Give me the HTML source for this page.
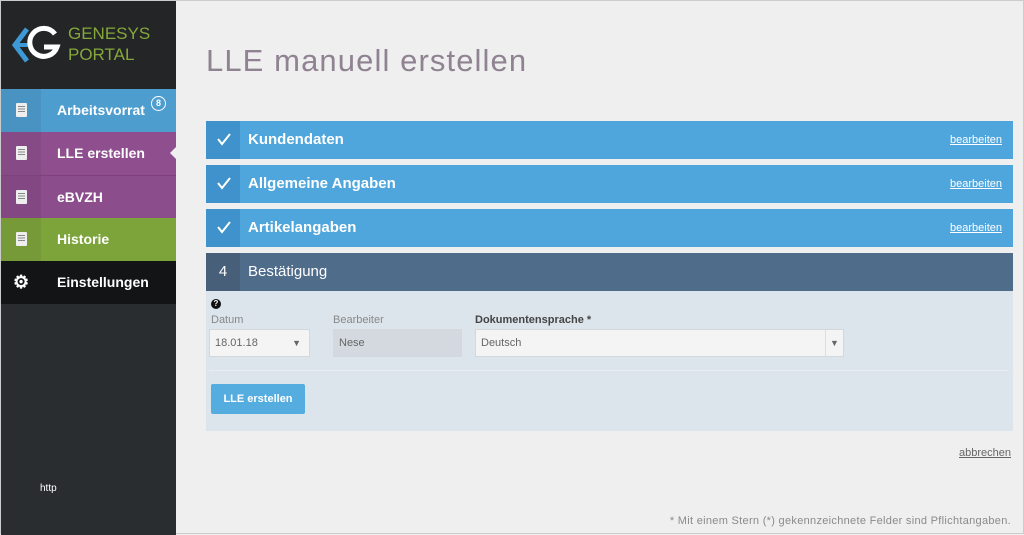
<!DOCTYPE html>
<html><head><meta charset="utf-8"><style>
*{margin:0;padding:0;box-sizing:border-box}
body{width:1024px;height:534px;overflow:hidden;background:#efefef;font-family:"Liberation Sans",sans-serif;position:relative;border:1px solid #ccc}
.sb{position:absolute;left:0;top:0;width:175px;height:534px;background:#2a2d30}
.logo{position:absolute;left:0;top:0;width:175px;height:88px;background:#232527}
.nav{position:absolute;left:0;width:175px;height:43px;color:#fff;font-size:14px;font-weight:bold;line-height:43px}
.nav .ic{position:absolute;left:0;top:0;width:40px;height:43px;background:rgba(0,0,0,0.06)}
.nav .t{position:absolute;left:56px;top:0}
.doc{position:absolute;left:15px;top:14px;width:11px;height:14px;background:#eee;border-radius:1px}
.doc:before{content:"";position:absolute;left:2px;top:3px;width:7px;height:7px;background:repeating-linear-gradient(#888 0 1px,transparent 1px 2.5px)}
.bar{position:absolute;left:205px;width:807px;height:38px;background:#4fa6dc;color:#fff;font-size:15px;font-weight:bold}
.bar .sq{position:absolute;left:0;top:0;width:34px;height:38px;background:#3f92cb}
.bar .t{position:absolute;left:42px;top:10px}
.bar .e{position:absolute;right:11px;top:13px;font-size:11px;text-decoration:underline;font-weight:normal}
.chk{position:absolute;left:10px;top:10px}
.lbl{position:absolute;font-size:11px;color:#888}
.inp{position:absolute;height:28px;border:1px solid #d5d8db;background:#f4f4f4;font-size:11px;color:#666;line-height:26px;padding-left:5px}
</style></head><body>
<div class="sb">
 <div class="logo">
  <svg style="position:absolute;left:10px;top:24px" width="52" height="40" viewBox="0 0 52 40">
   <path d="M16 4 L4 20 L16 36" fill="none" stroke="#3d9ad6" stroke-width="5"/>
   <path d="M6 20 H20" stroke="#3d9ad6" stroke-width="4"/>
   <path d="M44 9 A14 14 0 1 0 46 22 H33" fill="none" stroke="#fff" stroke-width="5"/>
  </svg>
  <div style="position:absolute;left:67px;top:22px;color:#86a83a;font-size:17px;line-height:21px">GENESYS<br>PORTAL</div>
 </div>
 <div class="nav" style="top:88px;background:#4e9dcf"><div class="ic"><div class="doc"></div></div><span class="t">Arbeitsvorrat</span>
  <span style="position:absolute;left:150px;top:7px;width:15px;height:15px;border:1.5px solid #fff;border-radius:50%;font-size:9px;line-height:12px;text-align:center">8</span></div>
 <div class="nav" style="top:131px;background:#8f4f8f"><div class="ic"><div class="doc"></div></div><span class="t">LLE erstellen</span>
  <span style="position:absolute;right:0;top:15px;border:6px solid transparent;border-right-color:#efefef"></span></div>
 <div class="nav" style="top:174px;background:#8c4d8c;border-top:1px solid #7d427d"><div class="ic"><div class="doc"></div></div><span class="t">eBVZH</span></div>
 <div class="nav" style="top:217px;background:#7da43b"><div class="ic"><div class="doc"></div></div><span class="t">Historie</span></div>
 <div class="nav" style="top:260px;background:#121416"><span style="position:absolute;left:12px;top:0;font-size:18px">⚙</span><span class="t">Einstellungen</span></div>
 <div style="position:absolute;left:39px;top:482px;color:#fff;font-size:10px">http</div>
</div>
<div style="position:absolute;left:205px;top:42px;font-size:31px;color:#8f8291;letter-spacing:1.1px">LLE manuell erstellen</div>

<div class="bar" style="top:120px"><div class="sq"><svg class="chk" width="16" height="16"><path d="M2 8 L6 13 L14 3" stroke="#fff" stroke-width="2" fill="none"/></svg></div><span class="t">Kundendaten</span><span class="e">bearbeiten</span></div>
<div class="bar" style="top:164px"><div class="sq"><svg class="chk" width="16" height="16"><path d="M2 8 L6 13 L14 3" stroke="#fff" stroke-width="2" fill="none"/></svg></div><span class="t">Allgemeine Angaben</span><span class="e">bearbeiten</span></div>
<div class="bar" style="top:208px"><div class="sq"><svg class="chk" width="16" height="16"><path d="M2 8 L6 13 L14 3" stroke="#fff" stroke-width="2" fill="none"/></svg></div><span class="t">Artikelangaben</span><span class="e">bearbeiten</span></div>
<div class="bar" style="top:252px;background:#4f6c8a"><div class="sq" style="background:#475f79;text-align:center;line-height:38px;font-weight:normal">4</div><span class="t" style="font-weight:normal">Bestätigung</span></div>

<div style="position:absolute;left:205px;top:290px;width:807px;height:140px;background:#dde5ec">
 <div style="position:absolute;left:5px;top:8px;width:10px;height:10px;border-radius:50%;background:#111;color:#fff;font-size:8px;line-height:10px;text-align:center;font-weight:bold">?</div>
 <div class="lbl" style="left:5px;top:23px">Datum</div>
 <div class="lbl" style="left:127px;top:23px">Bearbeiter</div>
 <div class="lbl" style="left:269px;top:23px;color:#444;font-weight:bold">Dokumentensprache *</div>
 <div class="inp" style="left:3px;top:38px;width:101px">18.01.18<span style="position:absolute;right:8px;font-size:9px">▼</span></div>
 <div class="inp" style="left:127px;top:38px;width:129px;background:#d3d9df">Nese</div>
 <div class="inp" style="left:269px;top:38px;width:369px">Deutsch<span style="position:absolute;right:0;top:0;width:18px;height:26px;border-left:1px solid #ddd;text-align:center;font-size:9px">▼</span></div>
 <div style="position:absolute;left:3px;top:79px;width:800px;border-top:1px solid #e8edf1"></div>
 <div style="position:absolute;left:5px;top:93px;width:94px;height:30px;background:#54acdf;border-radius:2px;color:#fff;font-size:11px;font-weight:bold;text-align:center;line-height:30px">LLE erstellen</div>
</div>
<div style="position:absolute;right:12px;top:446px;font-size:11px;color:#666;text-decoration:underline">abbrechen</div>
<div style="position:absolute;right:12px;top:514px;font-size:11px;color:#8a8a8a;letter-spacing:0.3px">* Mit einem Stern (*) gekennzeichnete Felder sind Pflichtangaben.</div>
</body></html>
